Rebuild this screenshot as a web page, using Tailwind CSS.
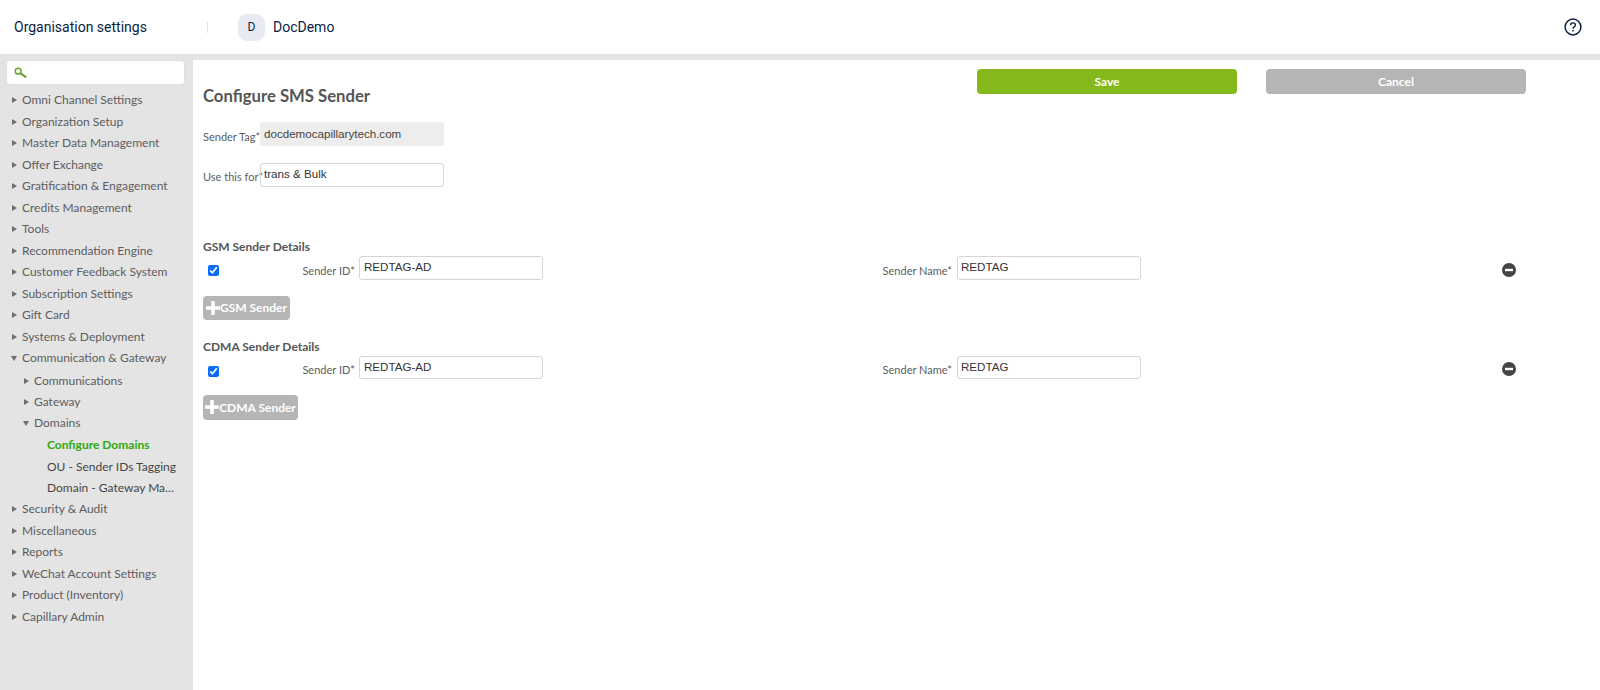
<!DOCTYPE html>
<html lang="en">
<head>
    <meta charset="UTF-8">
    <title>Organisation settings</title>
    <script src="https://cdn.jsdelivr.net/npm/@tailwindcss/browser@4"></script>
</head>
<body class="h-[690px] overflow-hidden bg-white font-['Lato',sans-serif]">

    <!-- Top bar -->
    <header class="flex h-[54px] items-center bg-white pl-[14px] pr-[18px] font-['Roboto',sans-serif] text-[14px] text-[#091e42]">
        <span class="w-[193px]">Organisation settings</span>
        <span class="h-[11px] w-px bg-[#e4e4e4]"></span>
        <span class="ml-[30px] flex h-[27px] w-[27px] items-center justify-center rounded-[9px] bg-[#e8eaf2] text-[12px]">D</span>
        <span class="ml-[8px]">DocDemo</span>
        <svg class="ml-auto" width="18" height="18" viewBox="0 0 18 18" fill="none" stroke="#091e42">
            <circle cx="9" cy="9" r="7.9" stroke-width="1.5"/>
            <path d="M6.6 7.2c0-1.4 1-2.3 2.4-2.3s2.4.9 2.4 2.1c0 1.9-2.4 1.9-2.4 3.7" stroke-width="1.4"/>
            <path d="M9 12.1v1.5" stroke-width="1.5"/>
        </svg>
    </header>

    <div class="flex h-[636px] bg-[#e4e4e4]">
        <!-- Sidebar -->
        <aside class="w-[193px] shrink-0 pt-[7px] text-[12px] text-[#5c5d5f]">
            <div class="mx-[7px] flex h-[23px] w-[177px] items-center rounded-[2px] bg-white pl-[7px] shadow-[0_0_1px_#bbb]">
                <svg width="14" height="12" viewBox="0 0 14 12" fill="none" stroke="#6da233">
                    <circle cx="4.2" cy="4.2" r="2.9" stroke-width="1.5"/>
                    <path d="M6.6 6.4l5.6 4" stroke-width="2.2"/>
                </svg>
            </div>
            <ul class="mt-[5.5px]">
                <li class="flex h-[21.5px] items-center pl-[12px]"><svg class="mr-[5px]" width="5" height="6" viewBox="0 0 5 6" fill="#6e6e6e"><path d="M0 0l5 3-5 3z"/></svg>Omni Channel Settings</li>
                <li class="flex h-[21.5px] items-center pl-[12px]"><svg class="mr-[5px]" width="5" height="6" viewBox="0 0 5 6" fill="#6e6e6e"><path d="M0 0l5 3-5 3z"/></svg>Organization Setup</li>
                <li class="flex h-[21.5px] items-center pl-[12px]"><svg class="mr-[5px]" width="5" height="6" viewBox="0 0 5 6" fill="#6e6e6e"><path d="M0 0l5 3-5 3z"/></svg>Master Data Management</li>
                <li class="flex h-[21.5px] items-center pl-[12px]"><svg class="mr-[5px]" width="5" height="6" viewBox="0 0 5 6" fill="#6e6e6e"><path d="M0 0l5 3-5 3z"/></svg>Offer Exchange</li>
                <li class="flex h-[21.5px] items-center pl-[12px]"><svg class="mr-[5px]" width="5" height="6" viewBox="0 0 5 6" fill="#6e6e6e"><path d="M0 0l5 3-5 3z"/></svg>Gratification &amp; Engagement</li>
                <li class="flex h-[21.5px] items-center pl-[12px]"><svg class="mr-[5px]" width="5" height="6" viewBox="0 0 5 6" fill="#6e6e6e"><path d="M0 0l5 3-5 3z"/></svg>Credits Management</li>
                <li class="flex h-[21.5px] items-center pl-[12px]"><svg class="mr-[5px]" width="5" height="6" viewBox="0 0 5 6" fill="#6e6e6e"><path d="M0 0l5 3-5 3z"/></svg>Tools</li>
                <li class="flex h-[21.5px] items-center pl-[12px]"><svg class="mr-[5px]" width="5" height="6" viewBox="0 0 5 6" fill="#6e6e6e"><path d="M0 0l5 3-5 3z"/></svg>Recommendation Engine</li>
                <li class="flex h-[21.5px] items-center pl-[12px]"><svg class="mr-[5px]" width="5" height="6" viewBox="0 0 5 6" fill="#6e6e6e"><path d="M0 0l5 3-5 3z"/></svg>Customer Feedback System</li>
                <li class="flex h-[21.5px] items-center pl-[12px]"><svg class="mr-[5px]" width="5" height="6" viewBox="0 0 5 6" fill="#6e6e6e"><path d="M0 0l5 3-5 3z"/></svg>Subscription Settings</li>
                <li class="flex h-[21.5px] items-center pl-[12px]"><svg class="mr-[5px]" width="5" height="6" viewBox="0 0 5 6" fill="#6e6e6e"><path d="M0 0l5 3-5 3z"/></svg>Gift Card</li>
                <li class="flex h-[21.5px] items-center pl-[12px]"><svg class="mr-[5px]" width="5" height="6" viewBox="0 0 5 6" fill="#6e6e6e"><path d="M0 0l5 3-5 3z"/></svg>Systems &amp; Deployment</li>
                <li class="flex h-[21.5px] items-center pl-[11px]"><svg class="mr-[5px]" width="6" height="5" viewBox="0 0 6 5" fill="#6e6e6e"><path d="M0 0h6l-3 5z"/></svg>Communication &amp; Gateway</li>
                <li class="mt-[1px] flex h-[21.4px] items-center pl-[24px]"><svg class="mr-[5px]" width="5" height="6" viewBox="0 0 5 6" fill="#6e6e6e"><path d="M0 0l5 3-5 3z"/></svg>Communications</li>
                <li class="flex h-[21.4px] items-center pl-[24px]"><svg class="mr-[5px]" width="5" height="6" viewBox="0 0 5 6" fill="#6e6e6e"><path d="M0 0l5 3-5 3z"/></svg>Gateway</li>
                <li class="flex h-[20.6px] items-center pl-[23px]"><svg class="mr-[5px]" width="6" height="5" viewBox="0 0 6 5" fill="#6e6e6e"><path d="M0 0h6l-3 5z"/></svg>Domains</li>
                <li class="mt-[1.5px] flex h-[21px] items-center pl-[47px] font-bold text-[#2eaa0c]">Configure Domains</li>
                <li class="flex h-[21.6px] items-center pl-[47px] text-[#444]">OU - Sender IDs Tagging</li>
                <li class="flex h-[21px] items-center pl-[47px] text-[#444]">Domain - Gateway Ma…</li>
                <li class="flex h-[21.5px] items-center pl-[12px]"><svg class="mr-[5px]" width="5" height="6" viewBox="0 0 5 6" fill="#6e6e6e"><path d="M0 0l5 3-5 3z"/></svg>Security &amp; Audit</li>
                <li class="flex h-[21.5px] items-center pl-[12px]"><svg class="mr-[5px]" width="5" height="6" viewBox="0 0 5 6" fill="#6e6e6e"><path d="M0 0l5 3-5 3z"/></svg>Miscellaneous</li>
                <li class="flex h-[21.5px] items-center pl-[12px]"><svg class="mr-[5px]" width="5" height="6" viewBox="0 0 5 6" fill="#6e6e6e"><path d="M0 0l5 3-5 3z"/></svg>Reports</li>
                <li class="flex h-[21.5px] items-center pl-[12px]"><svg class="mr-[5px]" width="5" height="6" viewBox="0 0 5 6" fill="#6e6e6e"><path d="M0 0l5 3-5 3z"/></svg>WeChat Account Settings</li>
                <li class="flex h-[21.5px] items-center pl-[12px]"><svg class="mr-[5px]" width="5" height="6" viewBox="0 0 5 6" fill="#6e6e6e"><path d="M0 0l5 3-5 3z"/></svg>Product (Inventory)</li>
                <li class="flex h-[21.5px] items-center pl-[12px]"><svg class="mr-[5px]" width="5" height="6" viewBox="0 0 5 6" fill="#6e6e6e"><path d="M0 0l5 3-5 3z"/></svg>Capillary Admin</li>
            </ul>
        </aside>

        <!-- Main panel -->
        <main class="mt-[6px] flex-1 bg-white pl-[10px] text-[11px] text-[#5c5d5f]">
            <div class="flex items-start pt-[9px]">
                <h1 class="mt-[15px] text-[16.7px] font-bold leading-[24px] text-[#555]">Configure SMS Sender</h1>
                <div class="ml-auto mr-[74px] flex gap-[29px] text-[12px] font-bold text-white">
                    <button class="h-[25px] w-[260px] rounded-[4px] bg-[#84b81b]">Save</button>
                    <button class="h-[25px] w-[260px] rounded-[4px] bg-[#b5b5b5]">Cancel</button>
                </div>
            </div>

            <div class="mt-[14px] flex items-center">
                <label class="w-[57px] whitespace-nowrap pt-[6px]">Sender Tag*</label>
                <input class="h-[24px] w-[184px] rounded-[3px] bg-[#ededed] px-[4px] pb-[1px] font-['Liberation_Sans',sans-serif] text-[11.6px] text-[#444]" value="docdemocapillarytech.com" disabled>
            </div>
            <div class="mt-[17px] flex items-center">
                <label class="w-[57px] whitespace-nowrap pt-[5px]">Use this for*</label>
                <input class="h-[24px] w-[184px] rounded-[3px] border border-[#d5d5d5] px-[3px] pb-[3px] font-['Liberation_Sans',sans-serif] text-[11.6px] text-[#333]" value="trans &amp; Bulk">
            </div>

            <h2 class="mt-[51px] text-[12px] font-bold leading-[18px] text-[#555]">GSM Sender Details</h2>
            <div class="flex h-[24px] items-center">
                <input type="checkbox" checked class="ml-[5px] mt-[5px] h-[11px] w-[11px] accent-[#0a6cf5]">
                <label class="w-[136px] whitespace-nowrap pt-[6px] text-right">Sender ID*</label>
                <input class="ml-[4px] h-[24px] w-[184px] rounded-[3px] border border-[#d5d5d5] px-[4px] pb-[3px] font-['Liberation_Sans',sans-serif] text-[11.6px] text-[#333]" value="REDTAG-AD">
                <label class="ml-[314px] w-[95px] whitespace-nowrap pt-[6px] text-right">Sender Name*</label>
                <input class="ml-[5px] h-[24px] w-[184px] rounded-[3px] border border-[#d5d5d5] px-[3px] pb-[3px] font-['Liberation_Sans',sans-serif] text-[11.6px] text-[#333]" value="REDTAG">
                <svg class="ml-[361px] mt-[3px]" width="14" height="14" viewBox="0 0 14 14"><circle cx="7" cy="7" r="7" fill="#444"/><rect x="3" y="5.8" width="8" height="2.4" fill="#fff"/></svg>
            </div>
            <button class="mt-[16px] flex h-[24px] w-[87px] items-center justify-center rounded-[4px] bg-[#b5b5b5] text-[12px] font-bold text-white">
                <svg class="mt-[-1px]" width="14" height="14" viewBox="0 0 14 14" fill="#fff"><path d="M5.2 0h3.6v5.2H14v3.6H8.8V14H5.2V8.8H0V5.2h5.2z"/></svg>GSM Sender
            </button>

            <h2 class="mt-[18px] text-[12px] font-bold leading-[18px] text-[#555]">CDMA Sender Details</h2>
            <div class="flex h-[23px] items-center">
                <input type="checkbox" checked class="ml-[5px] mt-[7px] h-[11px] w-[11px] accent-[#0a6cf5]">
                <label class="w-[136px] whitespace-nowrap pt-[6px] text-right">Sender ID*</label>
                <input class="ml-[4px] h-[23px] w-[184px] rounded-[3px] border border-[#d5d5d5] px-[4px] pb-[3px] font-['Liberation_Sans',sans-serif] text-[11.6px] text-[#333]" value="REDTAG-AD">
                <label class="ml-[314px] w-[95px] whitespace-nowrap pt-[6px] text-right">Sender Name*</label>
                <input class="ml-[5px] h-[23px] w-[184px] rounded-[3px] border border-[#d5d5d5] px-[3px] pb-[3px] font-['Liberation_Sans',sans-serif] text-[11.6px] text-[#333]" value="REDTAG">
                <svg class="ml-[361px] mt-[3px]" width="14" height="14" viewBox="0 0 14 14"><circle cx="7" cy="7" r="7" fill="#444"/><rect x="3" y="5.8" width="8" height="2.4" fill="#fff"/></svg>
            </div>
            <button class="mt-[16px] flex h-[25px] w-[95px] items-center justify-center rounded-[4px] bg-[#b5b5b5] text-[12px] font-bold text-white">
                <svg class="mt-[-1px]" width="14" height="14" viewBox="0 0 14 14" fill="#fff"><path d="M5.2 0h3.6v5.2H14v3.6H8.8V14H5.2V8.8H0V5.2h5.2z"/></svg>CDMA Sender
            </button>
        </main>
    </div>
</body>
</html>
